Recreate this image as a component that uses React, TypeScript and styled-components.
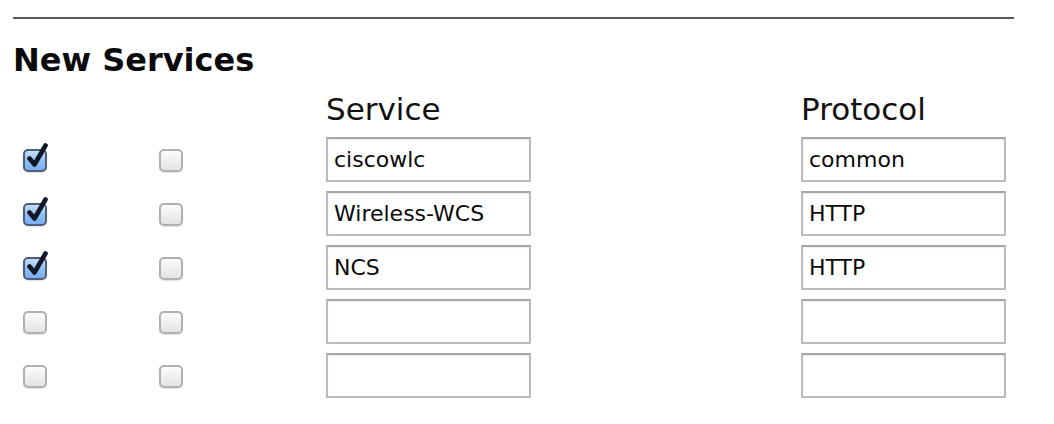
import styled, { createGlobalStyle } from 'styled-components'

const GlobalStyle = createGlobalStyle`
  html, body { margin:0; padding:0; background:#fff; }
  body { font-family: "DejaVu Sans", Verdana, sans-serif; color:#111; }
`

interface ServiceRow { enabled: boolean; remove: boolean; service: string; protocol: string }

const ROWS: ServiceRow[] = [
  { enabled: true, remove: false, service: 'ciscowlc', protocol: 'common' },
  { enabled: true, remove: false, service: 'Wireless-WCS', protocol: 'HTTP' },
  { enabled: true, remove: false, service: 'NCS', protocol: 'HTTP' },
  { enabled: false, remove: false, service: '', protocol: '' },
  { enabled: false, remove: false, service: '', protocol: '' },
]

function Check({ checked }: { checked: boolean }) {
  return (
    <Box $checked={checked}>
      {checked && (
        <Tick viewBox="0 0 26 28" width="26" height="28">
          <path d="M5.5 15.5 L10.5 21.5 L21.5 2.5" fill="none" stroke="#0f1829" strokeWidth="4.6" strokeLinecap="round" strokeLinejoin="round" />
        </Tick>
      )}
    </Box>
  )
}

export default function App() {
  return (
    <>
      <GlobalStyle />
      <Page>
        <Rule />
        <Heading>New Services</Heading>
        <Table>
          <span />
          <span />
          <ColHead>Service</ColHead>
          <ColHead>Protocol</ColHead>
          {ROWS.map((r, i) => (
            <Row key={i}>
              <Cell><Check checked={r.enabled} /></Cell>
              <Cell><Check checked={r.remove} /></Cell>
              <Cell><Field defaultValue={r.service} /></Cell>
              <Cell><Field defaultValue={r.protocol} /></Cell>
            </Row>
          ))}
        </Table>
      </Page>
    </>
  )
}

const Page = styled.div`
  padding:17px 0 0 13px;
  width:1054px;
  height:424px;
  box-sizing:border-box;
`
const Rule = styled.div`
  width:1001px;
  height:2px;
  background:#585858;
`
const Heading = styled.h2`
  margin:25px 0 0;
  font-size:32px;
  line-height:32px;
  font-weight:700;
  color:#0a0a0a;
`
const Table = styled.div`
  display:grid;
  grid-template-columns: 136px 167px 475px 205px;
  row-gap:9px;
  margin:18px 0 0 10px;
`
const ColHead = styled.div`
  font-size:31px;
  line-height:31px;
  padding-bottom:3px;
  color:#111;
`
const Row = styled.div`
  display:contents;
`
const Cell = styled.div`
  display:flex;
  align-items:center;
  height:45px;
`
const Box = styled.span<{ $checked: boolean }>`
  position:relative;
  display:block;
  width:24px;
  height:23px;
  box-sizing:border-box;
  margin-top:2px;
  border-radius:5px;
  border:2px solid ${p => p.$checked ? '#4f5e78' : '#b0b0b0'};
  background:${p => p.$checked
    ? 'linear-gradient(#c6defa, #8dbdf2 55%, #79aef0)'
    : 'linear-gradient(#fbfbfb, #e4e4e4)'};
  box-shadow:0 1px 1px rgba(0,0,0,.12);
`
const Tick = styled.svg`
  position:absolute;
  left:-1px;
  top:-8px;
`
const Field = styled.input`
  width:205px;
  height:45px;
  box-sizing:border-box;
  border:2px solid #bcbcbc;
  border-top-color:#a6a6a6;
  box-shadow:inset 0 1px 2px rgba(0,0,0,.08);
  padding:0 6px;
  font-family:"DejaVu Sans", Verdana, sans-serif;
  font-size:22px;
  color:#0a0a0a;
  background:#fff;
  outline:none;
`
